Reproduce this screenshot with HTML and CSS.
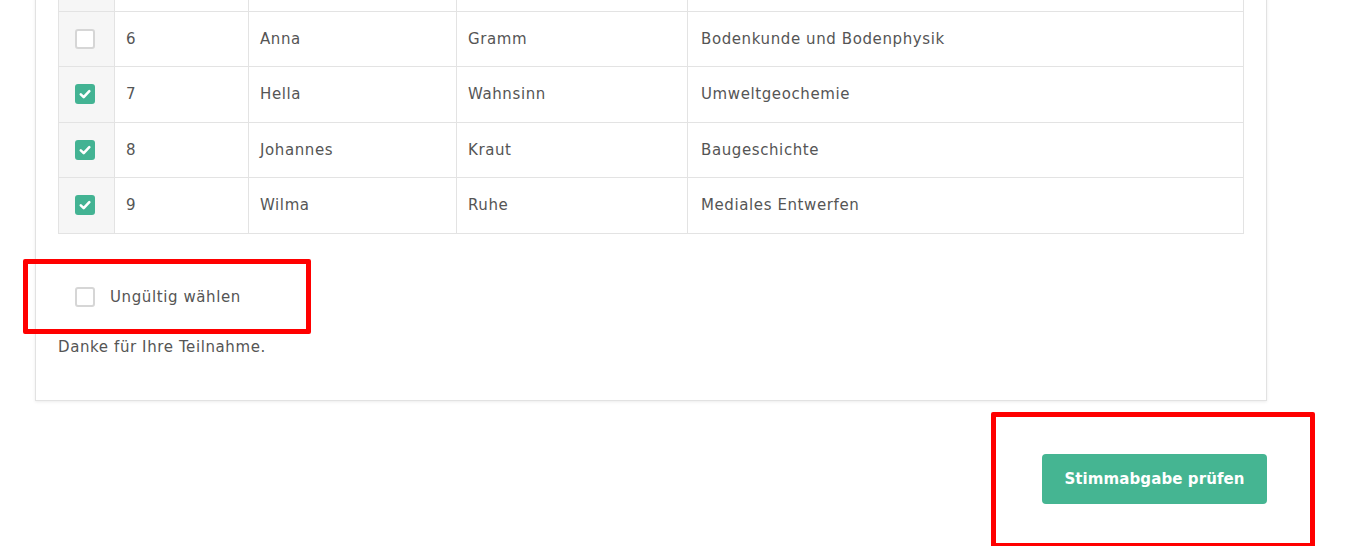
FILE: index.html
```html
<!DOCTYPE html>
<html lang="de">
<head>
  <meta charset="UTF-8" />
  <title>Stimmabgabe</title>
  <link rel="stylesheet" href="styles.css">
</head>
<body>

<div class="page">
  <div class="card">
    <table class="ballot">
      <!-- Zeile darüber liegt außerhalb des Sichtbereichs -->
      <tr class="above">
        <td class="pick"></td>
        <td class="nr"></td>
        <td class="col-first"></td>
        <td class="col-last"></td>
        <td></td>
      </tr>
      <tr>
        <td class="pick"><span class="box"></span></td>
        <td class="nr">6</td>
        <td class="col-first">Anna</td>
        <td class="col-last">Gramm</td>
        <td>Bodenkunde und Bodenphysik</td>
      </tr>
      <tr>
        <td class="pick"><span class="box checked"><svg viewBox="0 0 20 20"><path d="M5.8 10.4l2.9 2.7 5.6-5.9" /></svg></span></td>
        <td class="nr">7</td>
        <td class="col-first">Hella</td>
        <td class="col-last">Wahnsinn</td>
        <td>Umweltgeochemie</td>
      </tr>
      <tr>
        <td class="pick"><span class="box checked"><svg viewBox="0 0 20 20"><path d="M5.8 10.4l2.9 2.7 5.6-5.9" /></svg></span></td>
        <td class="nr">8</td>
        <td class="col-first">Johannes</td>
        <td class="col-last">Kraut</td>
        <td>Baugeschichte</td>
      </tr>
      <tr>
        <td class="pick"><span class="box checked"><svg viewBox="0 0 20 20"><path d="M5.8 10.4l2.9 2.7 5.6-5.9" /></svg></span></td>
        <td class="nr">9</td>
        <td class="col-first">Wilma</td>
        <td class="col-last">Ruhe</td>
        <td>Mediales Entwerfen</td>
      </tr>
    </table>

    <label class="invalid">
      <span class="box"></span>
      Ungültig wählen
    </label>

    <p class="thanks">Danke für Ihre Teilnahme.</p>
  </div>

  <div class="actions">
    <button type="button">Stimmabgabe prüfen</button>
  </div>

  <!-- Markierungen -->
  <div class="mark mark-invalid"></div>
  <div class="mark mark-submit"></div>
</div>

</body>
</html>
```

FILE: styles.css
```css
body {
  margin: 0;
  background: white;
  font-family: "DejaVu Sans", sans-serif;
  font-size: 15px;
  letter-spacing: 0.6px;
  color: #555;
}
.page {
  position: relative;
  width: 1232px;
  margin-left: 35px;
  margin-top: -57px;
  padding-bottom: 42px;
}
.card {
  background: white;
  border: 1px solid #e2e2e2;
  box-shadow: 0 1px 3px rgba(0,0,0,0.08);
  padding: 11px 22px 44px;
}
.ballot {
  width: 100%;
  border-collapse: collapse;
}
.ballot td {
  border: 1px solid #e3e3e3;
  height: 54.5px;
  padding: 0 12px 0 11px;
  vertical-align: middle;
}
.ballot td.pick {
  width: 39px;
  padding: 0 0 0 16px;
  background: #f6f6f6;
}
.ballot td.nr {
  width: 110px;
}
.ballot td.col-first {
  width: 184px;
}
.ballot td.col-last {
  width: 207px;
}
.ballot td:last-child {
  padding-left: 13px;
}
.box {
  display: inline-block;
  width: 20px;
  height: 20px;
  box-sizing: border-box;
  border: 2px solid #d6d6d6;
  border-radius: 3px;
  background: white;
  vertical-align: middle;
}
.box.checked {
  border: none;
  background: #43b393;
}
.box svg {
  display: block;
  width: 20px;
  height: 20px;
}
.box svg path {
  fill: none;
  stroke: white;
  stroke-width: 2.6;
  stroke-linecap: round;
  stroke-linejoin: round;
}
.invalid {
  display: flex;
  align-items: center;
  gap: 15px;
  margin: 52px 0 0 17px;
  height: 22px;
}
.thanks {
  margin: 30px 0 0;
}
.actions {
  display: flex;
  justify-content: flex-end;
  margin-top: 53px;
}
button {
  width: 225px;
  height: 50px;
  border: none;
  border-radius: 4px;
  background: #45b592;
  color: white;
  font-family: "DejaVu Sans", sans-serif;
  font-size: 15px;
  font-weight: bold;
  letter-spacing: 0.1px;
  cursor: pointer;
}
.mark {
  position: absolute;
  border: 5px solid #ff0000;
  border-radius: 2px;
}
.mark-invalid {
  left: -12px;
  top: 316px;
  width: 278px;
  height: 65px;
}
.mark-submit {
  left: 956px;
  top: 469px;
  width: 314px;
  height: 126px;
}
```
